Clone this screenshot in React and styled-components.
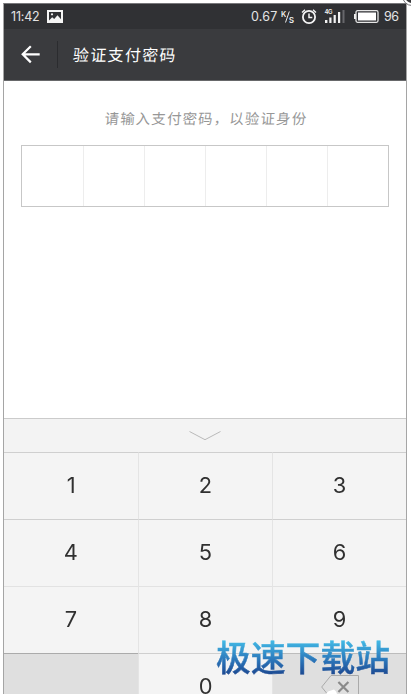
import React from "react";
import styled, { createGlobalStyle } from "styled-components";

const GlobalStyle = createGlobalStyle`
  * {
    box-sizing: border-box;
  }
  body {
    margin: 0;
    background: #fff;
    overflow: hidden;
    font-family: Inter, "Noto Sans CJK SC", sans-serif;
  }
`;

const Page = styled.div`
  position: relative;
  width: 411px;
  height: 694px;
  padding: 3px 4px 0 3px;
  overflow: hidden;
`;

const Screen = styled.div`
  width: 404px;
  height: 691px;
  display: flex;
  flex-direction: column;
  border: 1px solid #a5a5a5;
  border-top-color: #77777a;
  border-bottom: none;
  overflow: hidden;
`;

const StatusBar = styled.div`
  flex: none;
  height: 25px;
  display: flex;
  align-items: center;
  padding: 0 6px 0 7px;
  background: #303134;
  color: #e4e4e4;
  font-size: 12.5px;
  line-height: 25px;

  > svg {
    flex: none;
  }
`;

const Clock = styled.span`
  width: 36px;
  letter-spacing: -0.2px;
`;

const Spacer = styled.div`
  flex: 1;
`;

const Speed = styled.span`
  width: 30px;
  letter-spacing: 0.2px;
`;

const Battery = styled.span`
  width: 16px;
  margin-left: 5px;
  letter-spacing: -0.4px;
`;

const NavBar = styled.div`
  flex: none;
  height: 52px;
  display: flex;
  align-items: center;
  padding-left: 17px;
  background: #3a3b3e;
  border-bottom: 1px solid #67686a;
`;

const Divider = styled.div`
  width: 1px;
  height: 27px;
  margin: 0 15px 0 17px;
  background: #2b2c2f;
`;

const Title = styled.div`
  color: #fff;
  font-size: 16px;
  line-height: 24px;
  letter-spacing: 1.3px;
  transform: skewX(-4deg);
`;

const Content = styled.div`
  flex: none;
  height: 337px;
  padding: 26px 17px 0;
  background: #fff;
`;

const Prompt = styled.div`
  height: 24px;
  padding: 1px 0 0 2px;
  color: #979797;
  font-size: 14.4px;
  line-height: 22px;
  letter-spacing: 1.2px;
  text-align: center;
  white-space: nowrap;
  transform: skewX(-4deg);
`;

const PasswordBox = styled.div`
  height: 62px;
  margin-top: 14px;
  display: grid;
  grid-template-columns: repeat(6, 1fr);
  border: 1px solid #c7c7c7;
`;

const PasswordCell = styled.div`
  border-left: 1px solid #ededed;

  &:first-child {
    border-left: none;
  }
`;

const CollapseBar = styled.div`
  flex: none;
  height: 34px;
  display: flex;
  align-items: center;
  justify-content: center;
  background: #f3f3f3;
  border-top: 1px solid #cbcbcb;
`;

const Keypad = styled.div`
  flex: none;
  display: grid;
  grid-template-columns: 134px 134px 134px;
  grid-auto-rows: 67px;
`;

const Key = styled.div`
  display: flex;
  align-items: center;
  justify-content: center;
  background: ${(props) => (props.$muted ? "#dfdfdf" : "#f4f4f4")};
  border-top: 1px solid ${(props) => props.$line || "#cfcfcf"};
  border-left: 1px solid #e4e4e4;
  color: #303030;
  font-size: 21px;
  line-height: 24px;

  &:nth-child(3n + 1) {
    border-left: none;
  }
`;

const Digit = styled.span`
  font-weight: 400;
  transform: scaleX(1.04);
`;

const Watermark = styled.div`
  position: absolute;
  left: 216px;
  top: 632px;
  font-family: "Noto Sans CJK SC", sans-serif;
  font-size: 34.8px;
  font-weight: 500;
  line-height: 48px;
  white-space: nowrap;
  background: linear-gradient(#43bde8 16%, #2a74b8 60%, #1d4a92 88%);
  -webkit-background-clip: text;
  background-clip: text;
  color: transparent;
  -webkit-text-stroke: 0.5px transparent;
`;

const WatermarkEdge = styled.svg`
  position: absolute;
  left: 326px;
  top: 689px;
`;

const CornerRing = styled.svg`
  position: absolute;
  right: 0;
  top: 0;
`;

const Icon = styled.svg`
  margin-left: ${(props) => props.$gap || 0}px;
`;

const PictureIcon = () => (
  <Icon width="16" height="13" viewBox="0 0 16 13">
    <path
      fill="#f5f5f5"
      fillRule="evenodd"
      d="M0 0h16v13H0zM2 2v8.4l3.2-3.2 2 1.8 3.3-3.8 3.5 4V2z"
    />
    <circle cx="5" cy="4.3" r="1.1" fill="#f5f5f5" />
  </Icon>
);

const SpeedUnit = () => (
  <Icon width="14" height="14" viewBox="0 0 14 14" fill="#eee">
    <text x="0" y="7" fontSize="7.5" fontWeight="600">
      K
    </text>
    <path d="M4.5 12.5 8.3 1.5" stroke="#eee" strokeWidth="1" />
    <text x="7.8" y="12.5" fontSize="10" fontWeight="500">
      s
    </text>
  </Icon>
);

const AlarmIcon = () => (
  <Icon
    width="16"
    height="16"
    viewBox="0 0 16 16"
    fill="none"
    stroke="#f4f4f4"
    $gap={6}
  >
    <circle cx="8" cy="8" r="6.1" strokeWidth="1.8" />
    <path d="M8 4.6v4h3.3" strokeWidth="1.5" />
    <path d="M1 3.5 4 .8M15 3.5l-3-2.7" strokeWidth="1.4" />
  </Icon>
);

const SignalIcon = () => (
  <Icon width="22" height="16" viewBox="0 0 22 16" fill="#f2f2f2" $gap={7}>
    <text x="0.5" y="5" fontSize="6" fontWeight="600" letterSpacing="-0.6">
      4G
    </text>
    <path d="M1 11h2.4v3H1zM5.3 8.5h2.2V14H5.3zM9.6 6h2.2v8H9.6zM14 3h2.2v11H14z" />
    <path d="M18.5 1h2v13h-2z" fill="#66676a" />
  </Icon>
);

const BatteryIcon = () => (
  <Icon width="25" height="14" viewBox="0 0 25 14" $gap={8}>
    <path d="M0 4h2v5H0z" fill="#eee" />
    <rect
      x="2"
      y=".7"
      width="22"
      height="11.6"
      rx="1.5"
      fill="none"
      stroke="#e6e6e6"
      strokeWidth="1.3"
    />
    <path d="M4 2.5h18v8H4z" fill="#fff" />
  </Icon>
);

const BackIcon = () => (
  <Icon
    width="19"
    height="19"
    viewBox="0 0 19 19"
    fill="none"
    stroke="#fff"
    strokeWidth="2.2"
  >
    <path d="M9.8 1.2 1.7 9.3l8.1 8.1M1.7 9.3h17" />
  </Icon>
);

const ChevronIcon = () => (
  <Icon width="32" height="10" viewBox="0 0 32 10" fill="none" stroke="#b9b9b9">
    <path d="M.5 .5 16 8.7 31.5 .5" />
  </Icon>
);

const DeleteIcon = () => (
  <Icon width="38" height="24" viewBox="0 0 38 24" fill="none">
    <path d="M.7 12 10 .5h27.5v23H10z" stroke="#aaa" />
    <path d="m17.4 7 10 10m0-10-10 10" stroke="#8a8a8a" strokeWidth="2.2" />
  </Icon>
);

const digits = ["1", "2", "3", "4", "5", "6", "7", "8", "9"];

const App = () => {
  return (
    <Page>
      <GlobalStyle />
      <Screen>
        <StatusBar>
          <Clock>11:42</Clock>
          <PictureIcon />
          <Spacer />
          <Speed>0.67</Speed>
          <SpeedUnit />
          <AlarmIcon />
          <SignalIcon />
          <BatteryIcon />
          <Battery>96</Battery>
        </StatusBar>
        <NavBar>
          <BackIcon />
          <Divider />
          <Title>验证支付密码</Title>
        </NavBar>
        <Content>
          <Prompt>请输入支付密码，以验证身份</Prompt>
          <PasswordBox>
            {[0, 1, 2, 3, 4, 5].map((i) => (
              <PasswordCell key={i} />
            ))}
          </PasswordBox>
        </Content>
        <CollapseBar>
          <ChevronIcon />
        </CollapseBar>
        <Keypad>
          {digits.map((digit, i) => (
            <Key key={digit} $line={i > 5 ? "#e2e2e2" : undefined}>
              <Digit>{digit}</Digit>
            </Key>
          ))}
          <Key $muted $line="#ababab" />
          <Key>
            <Digit>0</Digit>
          </Key>
          <Key $muted $line="#bcbcbc">
            <DeleteIcon />
          </Key>
        </Keypad>
      </Screen>
      <Watermark>极速下载站</Watermark>
      <WatermarkEdge width="14" height="5" viewBox="0 0 14 5">
        <path d="M0 5 2 2.5 8 .5l2 2 1 2.5z" fill="#fff" />
      </WatermarkEdge>
      <CornerRing width="10" height="8" viewBox="0 0 10 8" fill="none">
        <circle cx="11" cy="-4" r="9.5" stroke="#77777a" />
        <circle cx="11" cy="-4" r="7" fill="#3a3a3c" />
      </CornerRing>
    </Page>
  );
};

export default App;
